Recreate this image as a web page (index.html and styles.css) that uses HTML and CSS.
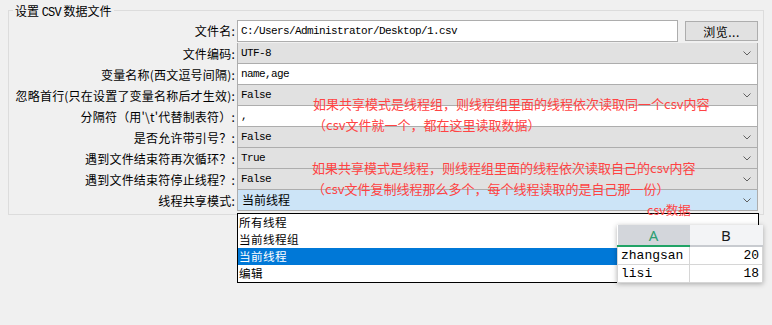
FILE: index.html
```html
<!DOCTYPE html>
<html lang="zh-CN">
<head>
  <meta charset="UTF-8">
  <title>CSV 数据文件设置</title>
  <link rel="stylesheet" href="styles.css">
</head>
<body>
  <div class="screen">
    <fieldset class="group">
      <legend>设置 <span class="legend-mono">CSV</span> 数据文件</legend>

      <div class="row row-first">
        <label class="label">文件名:</label>
        <div class="input input-path mono">C:/Users/Administrator/Desktop/1.csv</div>
        <button class="browse">浏览...</button>
      </div>
      <div class="row">
        <label class="label">文件编码:</label>
        <div class="select mono">UTF-8<svg class="chev" viewBox="0 0 8 5"><polyline points="0.5,0.5 4,4 7.5,0.5"/></svg></div>
      </div>
      <div class="row">
        <label class="label">变量名称(西文逗号间隔):</label>
        <div class="input mono">name,age</div>
      </div>
      <div class="row">
        <label class="label">忽略首行(只在设置了变量名称后才生效):</label>
        <div class="select mono">False<svg class="chev" viewBox="0 0 8 5"><polyline points="0.5,0.5 4,4 7.5,0.5"/></svg></div>
      </div>
      <div class="row">
        <label class="label">分隔符（用'\t'代替制表符）:</label>
        <div class="input mono">,</div>
      </div>
      <div class="row">
        <label class="label">是否允许带引号？:</label>
        <div class="select mono">False<svg class="chev" viewBox="0 0 8 5"><polyline points="0.5,0.5 4,4 7.5,0.5"/></svg></div>
      </div>
      <div class="row">
        <label class="label">遇到文件结束符再次循环？:</label>
        <div class="select mono">True<svg class="chev" viewBox="0 0 8 5"><polyline points="0.5,0.5 4,4 7.5,0.5"/></svg></div>
      </div>
      <div class="row">
        <label class="label">遇到文件结束符停止线程？:</label>
        <div class="select mono">False<svg class="chev" viewBox="0 0 8 5"><polyline points="0.5,0.5 4,4 7.5,0.5"/></svg></div>
      </div>
      <div class="row">
        <label class="label">线程共享模式:</label>
        <div class="select select-active">当前线程<svg class="chev" viewBox="0 0 8 5"><polyline points="0.5,0.5 4,4 7.5,0.5"/></svg></div>
      </div>
    </fieldset>

    <!-- 下拉列表 -->
    <ul class="dropdown">
      <li>所有线程</li>
      <li>当前线程组</li>
      <li class="selected">当前线程</li>
      <li>编辑</li>
    </ul>

    <!-- 红色批注 -->
    <div class="note note-group">
      <div>如果共享模式是线程组，则线程组里面的线程依次读取同一个csv内容</div>
      <div>（csv文件就一个，都在这里读取数据）</div>
    </div>
    <div class="note note-thread">
      <div>如果共享模式是线程，则线程组里面的线程依次读取自己的csv内容</div>
      <div>（csv文件复制线程那么多个，每个线程读取的是自己那一份）</div>
    </div>
    <div class="note note-csv">csv数据</div>

    <!-- 表格截图 -->
    <table class="sheet">
      <tr>
        <th class="col-a">A</th>
        <th class="col-b">B</th>
      </tr>
      <tr>
        <td>zhangsan</td>
        <td class="num">20</td>
      </tr>
      <tr>
        <td>lisi</td>
        <td class="num">18</td>
      </tr>
    </table>
  </div>
</body>
</html>
```
FILE: styles.css
```css
/* GENERAL */
body {
  margin: 0;
  background-color: #f0f0f0;
  font-family: "Noto Sans CJK SC", "Noto Sans", sans-serif;
  font-size: 12px;
  color: #000;
  overflow: hidden;
}

.screen {
  position: relative;
  width: 772px;
  height: 325px;
}

.mono {
  font-family: "Liberation Mono", monospace;
  font-size: 11px;
  letter-spacing: -0.6px;
}

/* GROUP BOX */
.group {
  box-sizing: border-box;
  width: 756px;
  margin: 2px 0 0 8px;
  padding: 0 5px 3px 0;
  border: 1px solid #dcdcdc;
  min-width: 0;
}

.group legend {
  margin-left: 4px;
  padding: 0 2px;
  height: 17px;
  line-height: 17px;
  font-size: 12px;
}

.legend-mono {
  font-family: "Liberation Mono", monospace;
  font-size: 12px;
  letter-spacing: -0.8px;
}

/* ROWS */
.row {
  display: flex;
  height: 21px;
}

.row-first {
  height: 23px;
  margin-top: 1px;
}

.label {
  width: 226px;
  padding-right: 2px;
  text-align: right;
  line-height: 21px;
  white-space: nowrap;
  flex-shrink: 0;
  letter-spacing: 0.2px;
}

.row-first .label {
  line-height: 22px;
}

.input,
.select {
  box-sizing: border-box;
  flex: 1;
  height: 21px;
  padding-left: 3px;
  line-height: 20px;
  border: 1px solid #adadad;
  border-top: 0;
  white-space: nowrap;
}

.input {
  background-color: #fff;
}

.input-path {
  height: 22px;
  line-height: 21px;
  border-top: 1px solid #adadad;
  margin-right: 7px;
}

.select {
  display: flex;
  justify-content: space-between;
  align-items: center;
  padding-right: 6px;
  background-color: #e1e1e1;
}

.select-active {
  background-color: #cce4f7;
  font-size: 12px;
  padding-left: 4px;
}

.chev {
  width: 8px;
  height: 5px;
  fill: none;
  stroke: #606060;
  stroke-width: 1;
}

.browse {
  width: 73px;
  height: 20px;
  margin-top: 1px;
  padding: 0;
  font-family: inherit;
  font-size: 12px;
  background-color: #e1e1e1;
  border: 1px solid #adadad;
  letter-spacing: 0.5px;
}

/* DROPDOWN */
.dropdown {
  position: absolute;
  left: 237px;
  top: 211px;
  width: 520px;
  margin: 0;
  padding: 0;
  list-style: none;
  background-color: #fff;
  border: 1px solid #000;
}

.dropdown li {
  height: 17px;
  line-height: 17px;
  padding-left: 1px;
  font-size: 11.6px;
  letter-spacing: 0.4px;
  overflow: hidden;
}

.dropdown .selected {
  background-color: #0078d7;
  color: #fff;
}

/* NOTES */
.note {
  position: absolute;
  color: #ff4343;
  font-size: 13px;
  line-height: 21px;
  white-space: nowrap;
}

.note-group {
  left: 313px;
  top: 91px;
}

.note-thread {
  left: 312px;
  top: 155px;
}

.note-csv {
  left: 647px;
  top: 199px;
  font-size: 12.5px;
  line-height: 18px;
}

/* SHEET */
.sheet {
  position: absolute;
  left: 617px;
  top: 223px;
  border-collapse: collapse;
  background-color: #fff;
  box-shadow: 0 1px 5px rgba(0, 0, 0, 0.3);
}

.sheet th {
  height: 20px;
  padding: 0;
  font-family: "Noto Sans", sans-serif;
  font-size: 15px;
  font-weight: normal;
  border-bottom: 2px solid #c8cbd0;
}

.sheet .col-a {
  width: 72px;
  background-color: #d3d6db;
  color: #2e9e72;
  border-bottom-color: #21a366;
}

.sheet .col-b {
  width: 73px;
  background-color: #f3f4f6;
  color: #1b1b1b;
}

.sheet td {
  height: 17px;
  padding: 0 3px;
  font-family: "Liberation Mono", monospace;
  font-size: 13px;
  line-height: 17px;
  border: 1px solid #d6d6d6;
  border-top: 0;
}

.sheet .num {
  text-align: right;
}
```
